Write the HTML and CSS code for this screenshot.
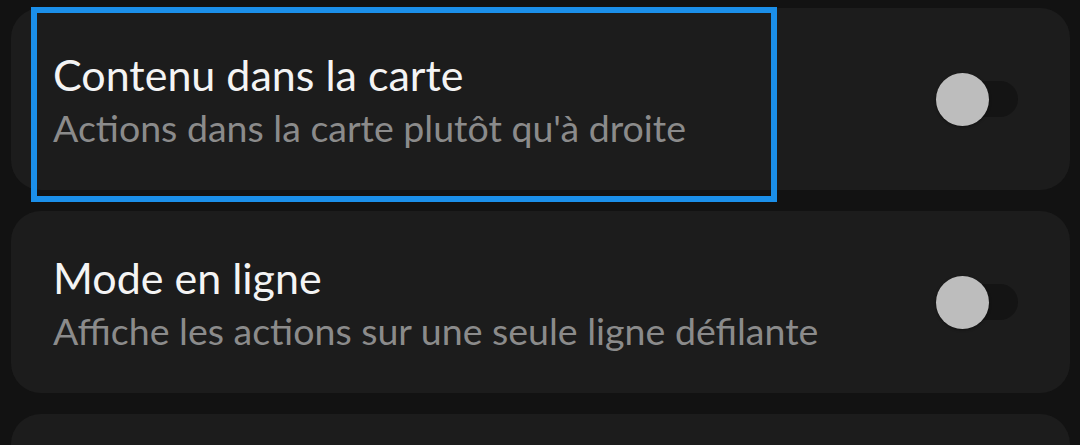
FILE: index.html
```html
<!DOCTYPE html>
<html lang="fr">
<head>
<meta charset="utf-8">
<link rel="stylesheet" href="styles.css">
</head>
<body>
<div class="list">
  <div class="card">
    <div class="texts">
      <div class="title">Contenu dans la carte</div>
      <div class="subtitle">Actions dans la carte plutôt qu'à droite</div>
    </div>
    <div class="switch"><span class="track"></span><span class="thumb"></span></div>
  </div>
  <div class="card">
    <div class="texts">
      <div class="title">Mode en ligne</div>
      <div class="subtitle">Affiche les actions sur une seule ligne défilante</div>
    </div>
    <div class="switch"><span class="track"></span><span class="thumb"></span></div>
  </div>
  <div class="card card-peek"></div>
  <div class="focus"></div>
</div>
</body>
</html>
```
FILE: styles.css
```css
html, body {
  margin: 0;
  padding: 0;
  background: #121212;
}
body {
  font-family: Lato, "Noto Sans", sans-serif;
}
.list {
  position: relative;
  height: 445px;
  box-sizing: border-box;
  overflow: hidden;
  display: flex;
  flex-direction: column;
  gap: 21px;
  padding: 8px 10px 0 11px;
}
.card {
  background: #1c1c1c;
  border-radius: 30px;
  height: 182px;
  flex-shrink: 0;
  display: flex;
  align-items: center;
  padding: 0 52px 0 42px;
}
.card-peek {
  height: 60px;
  border-radius: 30px 30px 0 0;
}
.texts {
  flex: 1;
  display: flex;
  flex-direction: column;
  padding-top: 5px;
}
.title {
  color: #f4f4f4;
  font-size: 43px;
  line-height: 52px;
}
.subtitle {
  color: #8b8b8b;
  font-size: 37.5px;
  line-height: 54px;
}
.switch {
  position: relative;
  width: 82px;
  height: 53px;
}
.track {
  position: absolute;
  left: 8px;
  right: 0;
  top: 8px;
  height: 36px;
  border-radius: 18px;
  background: #141414;
}
.thumb {
  position: absolute;
  left: 0;
  top: 0;
  width: 53px;
  height: 53px;
  border-radius: 50%;
  background: #bdbdbd;
  box-shadow: 0 1px 3px rgba(0,0,0,0.4);
}
.focus {
  position: absolute;
  left: 31px;
  top: 7px;
  width: 734px;
  height: 183px;
  border: 6px solid #1b8fe9;
}
```
